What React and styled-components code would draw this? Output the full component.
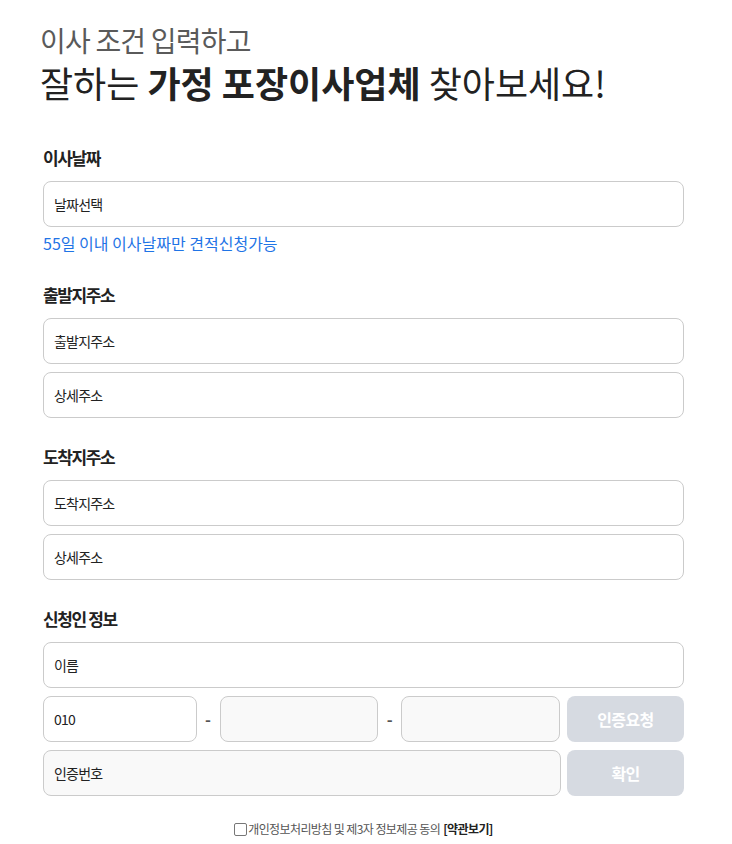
import React from 'react';
import styled, { createGlobalStyle } from 'styled-components';

const GlobalStyle = createGlobalStyle`
    body {
        margin: 0;
        background: #fff;
        font-family: 'Noto Sans CJK KR', 'Noto Sans', sans-serif;
        color: #222;
    }
    * { box-sizing: border-box; }
`;

const Page = styled.div`
    padding: 23px 48px 20px 43px;
`;

const Title = styled.div`
    margin-bottom: 42px;
`;

const SubTitle = styled.div`
    font-size: 28px;
    line-height: 34px;
    color: #5a5a5a;
    margin-left: -3px;
    letter-spacing: -0.8px;
`;

const MainTitle = styled.h1`
    margin: 3px 0 0 -3px;
    font-size: 36px;
    line-height: 44px;
    font-weight: 400;
    color: #222;
    letter-spacing: 0;
    b { font-weight: 700; }
`;

const Section = styled.section`
    padding-bottom: ${(p) => p.$last ? '0' : '27px'};
`;

const Label = styled.div`
    font-size: 17px;
    line-height: 24px;
    font-weight: 700;
    letter-spacing: -1.4px;
    color: #222;
    margin-bottom: 11px;
`;

const Stack = styled.div`
    display: flex;
    flex-direction: column;
    gap: 8px;
`;

const Input = styled.input`
    width: 100%;
    height: 46px;
    border: 1px solid #cbcbcb;
    border-radius: 8px;
    background: ${(p) => p.$muted ? '#f9f9f9' : '#fff'};
    padding: 0 10px;
    font-family: 'Noto Sans CJK KR', sans-serif;
    font-size: 14px;
    letter-spacing: -0.8px;
    color: #222;
    outline: none;
    flex: ${(p) => p.$flex || 'none'};
    min-width: 0;
    &::placeholder { color: #222; }
`;

const Helper = styled.div`
    margin-top: 6px;
    font-size: 16px;
    line-height: 20px;
    color: #1f74e6;
    letter-spacing: 0;
    margin-bottom: 3px;
`;

const Row = styled.div`
    display: flex;
    align-items: center;
    gap: ${(p) => p.$gap || 0}px;
`;

const Dash = styled.span`
    width: 23px;
    flex: none;
    text-align: center;
    font-size: 16px;
    font-weight: 700;
    color: #555;
`;

const AuthButton = styled.button`
    flex: none;
    width: 117px;
    height: 46px;
    margin-left: ${(p) => p.$offset || 0}px;
    border: none;
    border-radius: 8px;
    background: #d6dae1;
    color: #fff;
    font-family: 'Noto Sans CJK KR', sans-serif;
    font-size: 16px;
    font-weight: 700;
    letter-spacing: -0.6px;
`;

const Agree = styled.label`
    display: flex;
    justify-content: center;
    align-items: center;
    margin-top: 25px;
    font-size: 12px;
    line-height: 16px;
    color: #555;
    letter-spacing: -0.6px;
    b { color: #222; font-weight: 700; margin-left: 3px; }
`;

const Check = styled.span`
    width: 13px;
    height: 13px;
    border: 1px solid #777;
    border-radius: 2px;
    margin-right: 1px;
    background: #fff;
`;

export default function App() {
    return (
        <Page>
            <GlobalStyle />
            <Title>
                <SubTitle>이사 조건 입력하고</SubTitle>
                <MainTitle>잘하는 <b>가정 포장이사업체</b> 찾아보세요!</MainTitle>
            </Title>

            <Section>
                <Label>이사날짜</Label>
                <Input placeholder="날짜선택" readOnly />
                <Helper>55일 이내 이사날짜만 견적신청가능</Helper>
            </Section>

            <Section>
                <Label>출발지주소</Label>
                <Stack>
                    <Input placeholder="출발지주소" readOnly />
                    <Input placeholder="상세주소" />
                </Stack>
            </Section>

            <Section>
                <Label>도착지주소</Label>
                <Stack>
                    <Input placeholder="도착지주소" readOnly />
                    <Input placeholder="상세주소" />
                </Stack>
            </Section>

            <Section $last>
                <Label>신청인 정보</Label>
                <Stack>
                    <Input placeholder="이름" />
                    <Row>
                        <Input $flex="153" defaultValue="010" />
                        <Dash>-</Dash>
                        <Input $flex="159" $muted disabled />
                        <Dash>-</Dash>
                        <Input $flex="159" $muted disabled />
                        <AuthButton $offset={7}>인증요청</AuthButton>
                    </Row>
                    <Row $gap={6}>
                        <Input $flex="1" $muted placeholder="인증번호" disabled />
                        <AuthButton>확인</AuthButton>
                    </Row>
                </Stack>
            </Section>

            <Agree>
                <Check />
                개인정보처리방침 및 제3자 정보제공 동의<b>[약관보기]</b>
            </Agree>
        </Page>
    );
}
